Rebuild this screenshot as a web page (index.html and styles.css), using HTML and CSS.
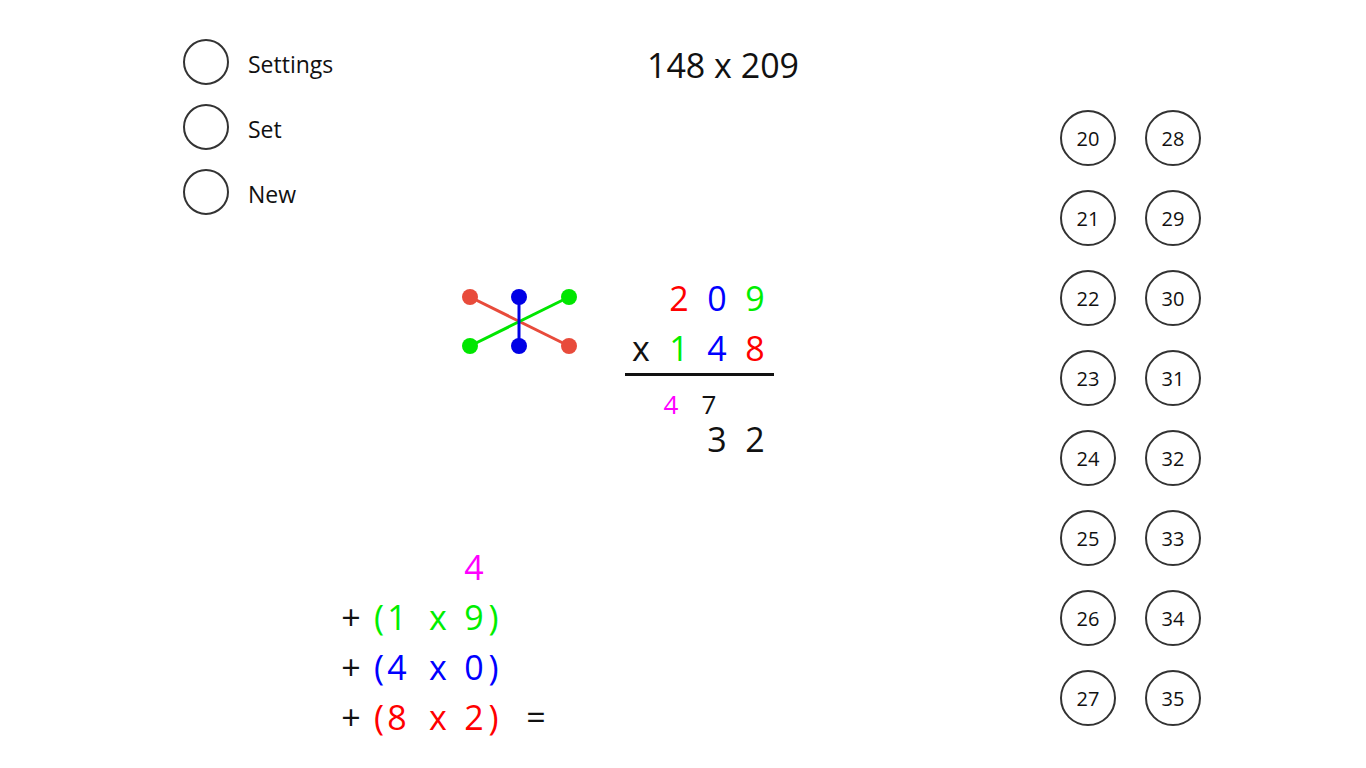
FILE: index.html
```html
<!DOCTYPE html>
<html lang="en">
<head>
<meta charset="utf-8">
<title>Multiplication</title>
<link rel="stylesheet" href="styles.css">
</head>
<body>
<div class="app">
  <main class="main">
    <header class="header">
      <nav class="nav">
        <div class="nav-item"><span class="nav-circle"></span><span class="nav-label">Settings</span></div>
        <div class="nav-item"><span class="nav-circle"></span><span class="nav-label">Set</span></div>
        <div class="nav-item"><span class="nav-circle"></span><span class="nav-label">New</span></div>
      </nav>
      <h1 class="title">148 x 209</h1>
    </header>

    <section class="work">
      <svg class="cross" width="120" height="70" viewBox="0 0 120 70">
        <line x1="10" y1="10" x2="109" y2="59" stroke="#e84b3b" stroke-width="3"/>
        <line x1="10" y1="59" x2="109" y2="10" stroke="#00e600" stroke-width="3"/>
        <line x1="59" y1="10" x2="59" y2="59" stroke="#0000e6" stroke-width="3"/>
        <circle cx="10" cy="10" r="8" fill="#e84b3b"/>
        <circle cx="109" cy="59" r="8" fill="#e84b3b"/>
        <circle cx="10" cy="59" r="8" fill="#00e600"/>
        <circle cx="109" cy="10" r="8" fill="#00e600"/>
        <circle cx="59" cy="10" r="8" fill="#0000e6"/>
        <circle cx="59" cy="59" r="8" fill="#0000e6"/>
      </svg>

      <div class="mult">
        <div class="mrow">
          <span></span><span class="red">2</span><span class="blue">0</span><span class="green">9</span>
        </div>
        <div class="mrow">
          <span>x</span><span class="green">1</span><span class="blue">4</span><span class="red">8</span>
        </div>
        <div class="rule"></div>
        <div class="carry">
          <span></span><span class="magenta">4</span><span>7</span>
        </div>
        <div class="mrow result">
          <span></span><span></span><span>3</span><span>2</span>
        </div>
      </div>
    </section>

    <section class="equation">
      <div class="eq-row eq-first"><span class="g magenta">4</span></div>
      <div class="eq-row">
        <span class="g plus">+</span><span class="p lp green">(</span><span class="g d1 green">1</span><span class="g x green">x</span><span class="g d2 green">9</span><span class="p rp green">)</span>
      </div>
      <div class="eq-row">
        <span class="g plus">+</span><span class="p lp blue">(</span><span class="g d1 blue">4</span><span class="g x blue">x</span><span class="g d2 blue">0</span><span class="p rp blue">)</span>
      </div>
      <div class="eq-row">
        <span class="g plus">+</span><span class="p lp red">(</span><span class="g d1 red">8</span><span class="g x red">x</span><span class="g d2 red">2</span><span class="p rp red">)</span><span class="g eq">=</span>
      </div>
    </section>
  </main>

  <aside class="pads">
    <div class="pad">20</div><div class="pad">28</div>
    <div class="pad">21</div><div class="pad">29</div>
    <div class="pad">22</div><div class="pad">30</div>
    <div class="pad">23</div><div class="pad">31</div>
    <div class="pad">24</div><div class="pad">32</div>
    <div class="pad">25</div><div class="pad">33</div>
    <div class="pad">26</div><div class="pad">34</div>
    <div class="pad">27</div><div class="pad">35</div>
  </aside>
</div>
</body>
</html>
```

FILE: styles.css
```css
* { box-sizing: border-box; }

html, body {
  margin: 0;
  padding: 0;
  background: #ffffff;
}

body {
  font-family: "Open Sans", "Noto Sans", "DejaVu Sans", sans-serif;
  color: #111111;
}

.app {
  width: 1366px;
  height: 768px;
  display: grid;
  grid-template-columns: 1060px auto;
  overflow: hidden;
}

/* header */
.header {
  display: flex;
  padding: 39px 0 0 183px;
}

.nav {
  width: 462px;
  display: flex;
  flex-direction: column;
  gap: 19px;
}

.nav-item {
  display: flex;
  align-items: center;
  height: 46px;
}

.nav-circle {
  width: 46px;
  height: 46px;
  border: 2px solid #333333;
  border-radius: 50%;
  flex: none;
}

.nav-label {
  margin-left: 19px;
  padding-top: 4px;
  font-size: 23px;
  line-height: 30px;
  color: #111111;
}

.title {
  margin: 6px 0 0 0;
  width: 156px;
  text-align: center;
  font-size: 34px;
  font-weight: 400;
  line-height: 40px;
  white-space: nowrap;
  color: #111111;
}

/* work area */
.work {
  display: flex;
  margin-top: 58px;
  padding-left: 460px;
}

.cross {
  display: block;
  margin-top: 14px;
  flex: none;
}

.mult {
  margin-left: 42px;
  font-size: 34px;
}

.mrow {
  display: grid;
  grid-template-columns: repeat(4, 38px);
  height: 50px;
  line-height: 50px;
  text-align: center;
}

.rule {
  margin-left: 3px;
  width: 149px;
  height: 3px;
  background: #111111;
}

.carry {
  display: grid;
  grid-template-columns: 30px 38px 38px;
  margin-top: 13px;
  height: 30px;
  line-height: 30px;
  font-size: 26px;
  text-align: center;
}

.mrow.result {
  height: 40px;
  line-height: 40px;
}

/* equation */
.equation {
  margin-top: 83px;
  padding-left: 341px;
  font-size: 34px;
}

.eq-row {
  display: flex;
  height: 50px;
  line-height: 50px;
}

.eq-first {
  padding-left: 123px;
}

.g, .p {
  display: block;
  text-align: center;
  flex: none;
}

.g { width: 20px; }
.p { width: 10px; }

.lp { margin-left: 13px; }
.d1 { margin-left: 3px; }
.x  { margin-left: 22px; width: 18px; }
.d2 { margin-left: 17px; }
.rp { margin-left: 4.5px; }
.eq { margin-left: 27.5px; }

/* colours */
.red { color: #ff0000; }
.blue { color: #0000ff; }
.green { color: #00ee00; }
.magenta { color: #ff00ff; }

/* right pads */
.pads {
  display: grid;
  grid-template-columns: 56px 56px;
  grid-auto-rows: 56px;
  column-gap: 29px;
  row-gap: 24px;
  align-content: start;
  padding-top: 110px;
}

.pad {
  width: 56px;
  height: 56px;
  border: 2px solid #333333;
  border-radius: 50%;
  display: flex;
  align-items: center;
  justify-content: center;
  font-size: 20px;
  color: #111111;
}
```
